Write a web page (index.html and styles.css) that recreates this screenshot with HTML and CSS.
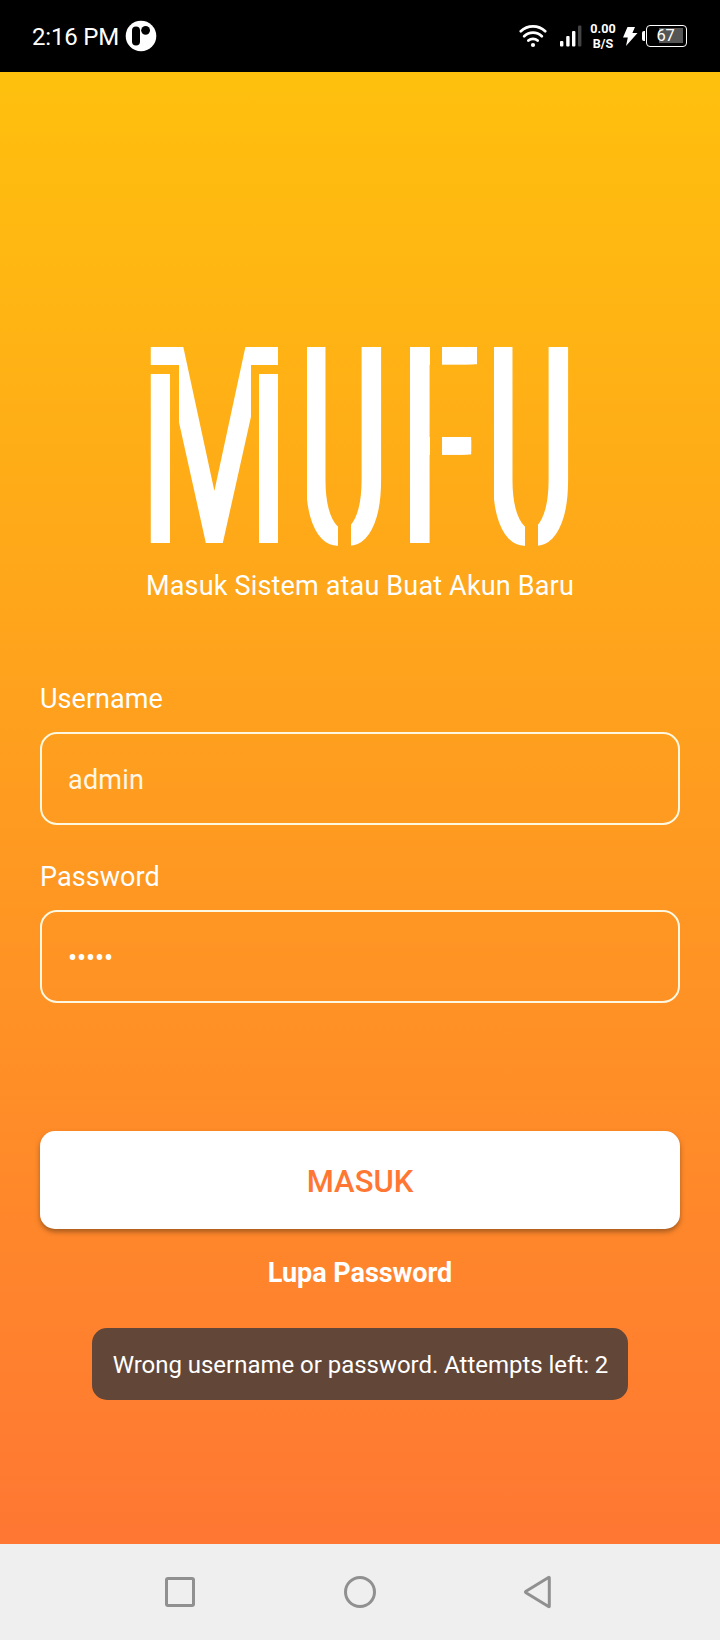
FILE: index.html
```html
<!DOCTYPE html>
<html lang="id">
<head>
<meta charset="utf-8">
<meta name="viewport" content="width=device-width, initial-scale=1">
<title>MUFU</title>
<link rel="stylesheet" href="styles.css">
</head>
<body>
<div class="phone">
  <header class="status">
    <span class="clock">2:16 PM</span>
    <svg class="app-badge" width="32" height="32" viewBox="0 0 32 32"><circle cx="16" cy="16" r="15.3" fill="#fff"/><rect x="7" y="6.5" width="8" height="19" rx="4"/><circle cx="20.6" cy="10.3" r="4.4"/></svg>
    <div class="indicators">
      <svg class="wifi" width="28" height="24" viewBox="0 0 28 24" fill="none" stroke="#fff" stroke-width="2.7" stroke-linecap="round"><path d="M1.8 7.3a17.4 17.4 0 0 1 24.4 0M5.2 12.3a12.6 12.6 0 0 1 17.6 0M9.4 16.6a6.8 6.8 0 0 1 9.2 0"/><circle cx="14" cy="21" r="2.1" fill="#fff" stroke="none"/></svg>
      <svg class="signal" width="22" height="22" viewBox="0 0 22 22"><g fill="#fff"><rect x="0" y="16" width="3.4" height="5.5" rx="1"/><rect x="6.2" y="11" width="3.4" height="10.5" rx="1"/><rect x="12" y="6" width="3.4" height="15.5" rx="1"/></g><rect x="18" y="0.5" width="3.4" height="21" rx="1" fill="#444"/></svg>
      <div class="speed"><span>0.00</span><span>B/S</span></div>
      <svg class="bolt" width="15" height="19" viewBox="0 0 15 19"><path d="M4.5 0H12L9.4 6H14.5L3 19L4.8 10.5H0Z" fill="#fff"/></svg>
      <span class="battery"><i></i><b>67</b></span>
    </div>
  </header>

  <main class="screen">
    <h1 class="logo">
      <span class="letter m"><span>M</span></span>
      <span class="letter u"><span>U</span></span>
      <span class="letter f"><span>F</span></span>
      <span class="letter u"><span>U</span></span>
    </h1>
    <p class="tagline">Masuk Sistem atau Buat Akun Baru</p>
    <form class="form">
      <label for="user">Username</label>
      <input id="user" class="field" type="text" value="admin">
      <label for="pass" class="second">Password</label>
      <input id="pass" class="field" type="password" value="admin">
      <button class="submit" type="button">MASUK</button>
    </form>
    <a class="forgot">Lupa Password</a>
    <div class="toast">Wrong username or password. Attempts left: 2</div>
  </main>

  <nav class="navbar">
    <svg width="34" height="34" viewBox="0 0 34 34"><rect x="3.5" y="3.5" width="27" height="27" rx="1.5"/></svg>
    <svg width="34" height="34" viewBox="0 0 34 34"><circle cx="17" cy="17" r="14.5"/></svg>
    <svg width="34" height="34" viewBox="0 0 34 34"><path d="M26.3 2.8V31.2Q26.3 32 25.5 31.5L3 17.8Q1.8 17 3 16.2L25.5 2.5Q26.3 2 26.3 2.8Z"/></svg>
  </nav>
</div>
</body>
</html>
```
FILE: styles.css
```css
* { box-sizing: border-box; }
body { margin: 0; font-family: Roboto, "Liberation Sans", sans-serif; color: #fff; }
.phone { width: 720px; height: 1640px; display: flex; flex-direction: column; overflow: hidden; }

.status { height: 72px; background: #000; display: flex; align-items: center; padding: 0 33px 0 32px; }
.clock { font-size: 24px; line-height: 30px; letter-spacing: -.2px; padding-top: 1px; }
.app-badge { margin-left: 6px; }
.indicators { margin-left: auto; display: flex; align-items: center; }
.signal { margin-left: 13px; }
.speed { margin-left: 8px; width: 26px; display: flex; flex-direction: column; align-items: center; font-size: 12.6px; line-height: 15px; font-weight: 700; }
.bolt { margin-left: 7px; }
.battery { margin-left: 4px; display: flex; align-items: center; }
.battery i { width: 3px; height: 10px; border-radius: 2px 0 0 2px; background: #fff; margin-right: 1px; }
.battery b { width: 41px; height: 22px; border: 1.5px solid #fff; border-radius: 4px; padding: 0 5px 0 3px; font-weight: 400; font-size: 16.5px; line-height: 20px; letter-spacing: -.3px; text-align: center; background: linear-gradient(#555, #555) no-repeat 12px 2px / 24px 15px; }

.screen { flex: 1; display: flex; flex-direction: column; align-items: center; padding: 275px 40px 0; background: linear-gradient(#ffc00d, #ff7733); }

/* Stencil wordmark: condensed glyphs with the breaks cut by masks */
.logo { margin: 0; width: 420px; height: 199px; display: flex; font-weight: 300; font-size: 275.7px; line-height: 203px; }
.letter { display: block; flex: none; height: 199px; }
.letter > span { display: block; width: max-content; transform-origin: 0 0; }
.letter.m { width: 129px; margin-right: 28px; font-weight: 700; -webkit-mask: linear-gradient(#000 0 0) 0 0 / 100% 18px no-repeat, linear-gradient(#000 0 0) 0 27px / 20px 200px no-repeat, linear-gradient(#000 0 0) 29px 0 / 72px 100% no-repeat, linear-gradient(#000 0 0) 109px 27px / 20px 200px no-repeat; }
.letter.m > span { transform: translateX(-10px) scaleX(.617); }
.letter.u { width: 76px; -webkit-mask: linear-gradient(90deg, #000 31px, transparent 31px 44px, #000 44px); }
.letter.u > span { transform: translateX(-11px) scaleX(.458); text-shadow: 7px 0, 14px 0, 20px 0, 26px 0; }
.letter.f { width: 67px; height: 196px; margin: 0 17px 0 27px; -webkit-mask: linear-gradient(90deg, #000 20px, transparent 20px 32px, #000 32px); }
.letter.f > span { transform: translateX(-12px) scaleX(.458); text-shadow: 7px 0, 14px 0, 20px 0, 27px 0, 7px 3px, 14px 3px, 20px 3px, 27px 3px; }

.tagline { margin: 22px 0 0; font-size: 27px; line-height: 36px; letter-spacing: .17px; }
.form { width: 640px; display: flex; flex-direction: column; margin-top: 77px; }
.form label { font-size: 27px; line-height: 36px; letter-spacing: .05px; }
.form .second { margin-top: 34px; }
.field { margin-top: 15px; height: 93px; border: 2px solid #fff8e0; border-radius: 17px; background: transparent; padding: 2px 26px 0; color: #fff8e8; font: 27px/36px Roboto, sans-serif; letter-spacing: .2px; outline: none; }
.field[type="password"] { letter-spacing: -.1px; color: #fff; }
.submit { margin-top: 128px; height: 98px; border: 0; border-radius: 15px; background: #fff; color: #ff7733; padding: 4px 0 0; font: 500 31px/40px Roboto, sans-serif; box-shadow: 0 3px 5px rgba(80, 50, 20, .5); }
.forgot { margin-top: 26px; font-size: 27px; line-height: 36px; font-weight: 700; letter-spacing: -.04px; }
.toast { margin-top: 37px; width: 536px; height: 72px; border-radius: 15px; background: #624637; font-size: 24px; line-height: 74px; letter-spacing: -.03px; padding-left: 1px; text-align: center; white-space: nowrap; }

.navbar { height: 96px; background: #efefef; display: grid; grid-template-columns: repeat(3, 180px); justify-content: center; align-items: center; justify-items: center; }
.navbar svg { fill: none; stroke: #909090; stroke-width: 3; stroke-linejoin: round; }
```
